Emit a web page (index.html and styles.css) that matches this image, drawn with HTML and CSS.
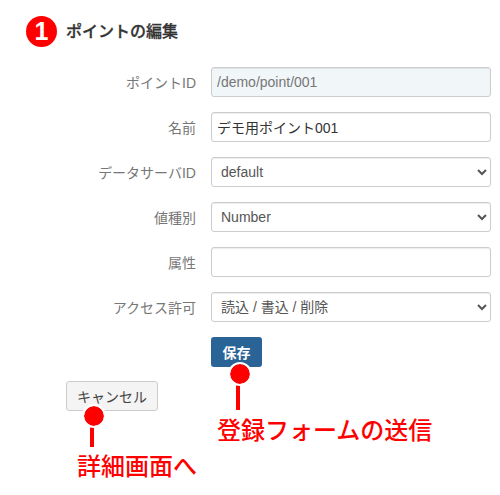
FILE: index.html
```html
<!DOCTYPE html>
<html lang="ja">

<head>
    <meta charset="UTF-8">
    <meta name="viewport" content="width=device-width, initial-scale=1.0">
    <title>ポイントの編集</title>
    <link rel="stylesheet" href="styles.css">
</head>

<body>
    <div class="page">
        <h1 class="title">ポイントの編集</h1>
        <form class="edit-form">
            <div class="form-group">
                <label for="pointId">ポイントID</label>
                <input type="text" id="pointId" class="form-control" value="/demo/point/001" readonly>
            </div>
            <div class="form-group">
                <label for="name">名前</label>
                <input type="text" id="name" class="form-control" value="デモ用ポイント001">
            </div>
            <div class="form-group">
                <label for="server">データサーバID</label>
                <select id="server" class="form-control">
                    <option>default</option>
                </select>
            </div>
            <div class="form-group">
                <label for="valueType">値種別</label>
                <select id="valueType" class="form-control">
                    <option>Number</option>
                </select>
            </div>
            <div class="form-group">
                <label for="attr">属性</label>
                <input type="text" id="attr" class="form-control">
            </div>
            <div class="form-group">
                <label for="access">アクセス許可</label>
                <select id="access" class="form-control">
                    <option>読込 / 書込 / 削除</option>
                </select>
            </div>
            <div class="form-actions">
                <button type="submit" class="btn btn-primary">保存</button>
            </div>
        </form>
        <button type="button" class="btn btn-default">キャンセル</button>
    </div>

    <!-- annotations drawn on top of the screenshot -->
    <div class="badge">1</div>

    <div class="pin pin-save"></div>
    <div class="note note-save">登録フォームの送信</div>

    <div class="pin pin-cancel"></div>
    <div class="note note-cancel">詳細画面へ</div>
</body>

</html>
```

FILE: styles.css
```css
* {
    box-sizing: border-box;
}

body {
    margin: 0;
    width: 500px;
    height: 495px;
    position: relative;
    overflow: hidden;
    background-color: #fff;
    color: #333;
    font-family: "Liberation Sans", "Noto Sans CJK JP", sans-serif;
    font-size: 14px;
}

.page {
    padding: 22px 9px 0 66px;
}

.title {
    margin: 0 0 25px;
    font-size: 16px;
    line-height: 20px;
    font-weight: 500;
    -webkit-text-stroke: 0.3px #333;
}

.form-group {
    display: flex;
    align-items: center;
    margin-bottom: 15px;
}

.form-group label {
    width: 130px;
    margin-right: 15px;
    text-align: right;
    color: #777;
}

.form-control {
    width: 280px;
    height: 30px;
    padding: 0 5px;
    border: 1px solid #ccc;
    border-radius: 3px;
    background-color: #fff;
    color: #555;
    font-family: inherit;
    font-size: 14px;
    box-shadow: inset 0 1px 1px rgba(0, 0, 0, 0.075);
}

.form-control[readonly] {
    background-color: #f1f6f9;
    color: #777;
}

#name {
    color: #333;
}

.form-actions {
    margin-left: 145px;
    margin-bottom: 14px;
}

.btn {
    display: block;
    height: 30px;
    padding: 0;
    border: 1px solid transparent;
    border-radius: 3px;
    font-family: inherit;
    font-size: 14px;
}

.btn-primary {
    width: 51px;
    background-color: #2a6496;
    color: #fff;
    font-weight: bold;
}

.btn-default {
    width: 92px;
    background-color: #f4f4f4;
    border-color: #ccc;
    color: #444;
}

.badge {
    position: absolute;
    left: 26px;
    top: 16px;
    width: 31px;
    height: 31px;
    border-radius: 50%;
    background-color: #f00;
    color: #fff;
    font-size: 25px;
    font-weight: bold;
    line-height: 31px;
    text-align: center;
}

.pin {
    position: absolute;
    width: 4px;
    background-color: #f00;
}

.pin::before {
    content: "";
    position: absolute;
    left: -8px;
    top: -10px;
    width: 20px;
    height: 20px;
    border: 2px solid #fff;
    border-radius: 50%;
    background-color: #f00;
    background-clip: padding-box;
}

.pin-save {
    left: 236px;
    top: 372px;
    height: 38px;
}

.pin-cancel {
    left: 90px;
    top: 414px;
    height: 33px;
}

.note {
    position: absolute;
    color: #f00;
    font-size: 24px;
    font-weight: 500;
    line-height: 28px;
    white-space: nowrap;
}

.note-save {
    left: 217px;
    top: 417px;
}

.note-cancel {
    left: 77px;
    top: 453px;
}
```
